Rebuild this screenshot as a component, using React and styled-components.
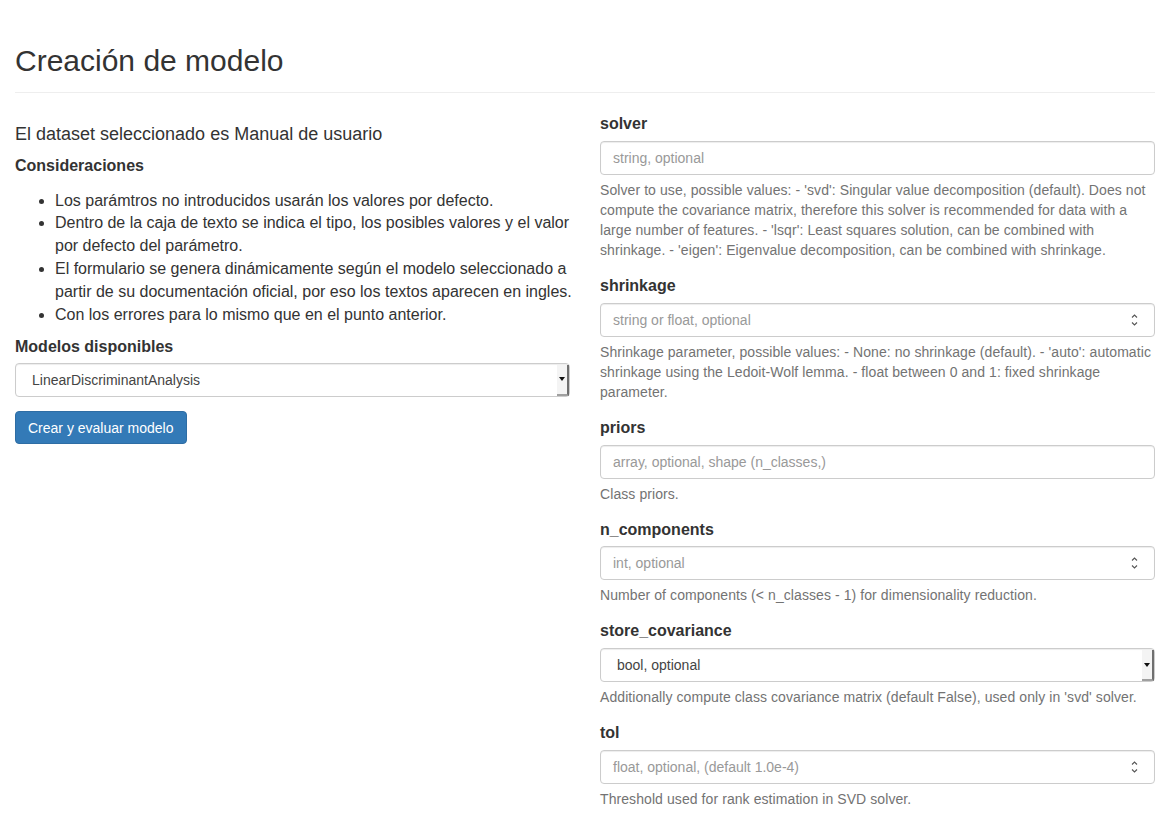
import styled, { createGlobalStyle } from 'styled-components';

const GlobalStyle = createGlobalStyle`
    * {
        box-sizing: border-box;
    }
    body {
        margin: 0;
        background: #fff;
        font-family: "Liberation Sans", Arial, sans-serif;
        font-size: 14px;
        line-height: 1.42857143;
        color: #333;
    }
`;

const Page = styled.div`
    padding: 0 15px;
`;

const PageHeader = styled.div`
    margin: 44px 0 20px;
    padding-bottom: 9px;
    border-bottom: 1px solid #eee;
`;

const Title = styled.h2`
    margin: 0 0 6px;
    font-size: 30px;
    font-weight: 500;
    line-height: 1.1;
`;

const Row = styled.div`
    display: grid;
    grid-template-columns: 1fr 1fr;
    column-gap: 30px;
`;

const Column = styled.div`
    display: flex;
    flex-direction: column;
    align-items: stretch;
`;

const Subtitle = styled.h4`
    margin: 12px 0 10px;
    font-size: 18px;
    font-weight: 500;
    line-height: 1.1;
`;

const Heading = styled.p`
    margin: 0 0 12px;
    font-size: 16px;
    font-weight: bold;
    line-height: 1.42857143;
`;

const List = styled.ul`
    margin: 0 -8px 9px 0;
    padding-left: 40px;
    font-size: 16px;
    line-height: 1.42857143;
`;

const FormGroup = styled.div`
    margin-bottom: ${p => p.$gap || '15px'};
`;

const Label = styled.label`
    display: block;
    margin-bottom: ${p => p.$gap || '5px'};
    font-size: 16px;
    font-weight: bold;
    line-height: 1.42857143;
`;

const Field = styled.div`
    position: relative;
    display: flex;
    align-items: center;
    height: 34px;
    padding: 6px 12px;
    border: 1px solid #ccc;
    border-radius: 4px;
    background: #fff;
    box-shadow: inset 0 1px 1px rgba(0, 0, 0, 0.075);
    font-size: 14px;
    color: ${p => (p.$value ? '#444' : '#999')};
`;

const FieldText = styled.span`
    flex: 1;
    padding-left: ${p => (p.$select ? '4px' : '0')};
    white-space: nowrap;
`;

const Spinner = styled.span`
    display: flex;
    align-items: center;
    margin-right: 3px;
`;

const DropButton = styled.span`
    position: absolute;
    top: 1px;
    right: 0;
    bottom: 0;
    width: 12px;
    display: flex;
    align-items: center;
    justify-content: center;
    background: #f4f4f4;
    border-right: 2px solid #6f6f6f;
    border-bottom: 2px solid #a0a0a0;
`;

const Triangle = styled.span`
    width: 0;
    height: 0;
    border-left: 3px solid transparent;
    border-right: 3px solid transparent;
    border-top: 4px solid #111;
`;

const Help = styled.p`
    margin: 5px 0 0;
    color: #737373;
    font-size: 14px;
    line-height: 1.42857143;
    letter-spacing: 0.08px;
`;

const Button = styled.button`
    align-self: flex-start;
    height: 33px;
    padding: 6px 12px;
    border: 1px solid #2e6da4;
    border-radius: 4px;
    background: #337ab7;
    color: #fff;
    font-family: inherit;
    font-size: 14px;
    line-height: 1.42857143;
`;

const SpinIcon = () => (
    <svg width="9" height="16" viewBox="0 0 9 16" fill="none" stroke="#555" strokeWidth="1.1">
        <path d="M2 5.5 L4.5 3 L7 5.5" />
        <path d="M2 10.5 L4.5 13 L7 10.5" />
    </svg>
);

const Input = ({ placeholder, spin }) => (
    <Field>
        <FieldText>{placeholder}</FieldText>
        {spin && (
            <Spinner>
                <SpinIcon />
            </Spinner>
        )}
    </Field>
);

const Select = ({ value }) => (
    <Field $value>
        <FieldText $select>{value}</FieldText>
        <DropButton>
            <Triangle />
        </DropButton>
    </Field>
);

const params = [
    {
        name: 'solver',
        placeholder: 'string, optional',
        help: "Solver to use, possible values: - 'svd': Singular value decomposition (default). Does not compute the covariance matrix, therefore this solver is recommended for data with a large number of features. - 'lsqr': Least squares solution, can be combined with shrinkage. - 'eigen': Eigenvalue decomposition, can be combined with shrinkage.",
    },
    {
        name: 'shrinkage',
        placeholder: 'string or float, optional',
        spin: true,
        help: "Shrinkage parameter, possible values: - None: no shrinkage (default). - 'auto': automatic shrinkage using the Ledoit-Wolf lemma. - float between 0 and 1: fixed shrinkage parameter.",
    },
    {
        name: 'priors',
        placeholder: 'array, optional, shape (n_classes,)',
        help: 'Class priors.',
    },
    {
        name: 'n_components',
        placeholder: 'int, optional',
        spin: true,
        help: 'Number of components (< n_classes - 1) for dimensionality reduction.',
    },
    {
        name: 'store_covariance',
        select: 'bool, optional',
        help: "Additionally compute class covariance matrix (default False), used only in 'svd' solver.",
    },
    {
        name: 'tol',
        placeholder: 'float, optional, (default 1.0e-4)',
        spin: true,
        help: 'Threshold used for rank estimation in SVD solver.',
    },
];

const tips = [
    'Los parámtros no introducidos usarán los valores por defecto.',
    'Dentro de la caja de texto se indica el tipo, los posibles valores y el valor por defecto del parámetro.',
    'El formulario se genera dinámicamente según el modelo seleccionado a partir de su documentación oficial, por eso los textos aparecen en ingles.',
    'Con los errores para lo mismo que en el punto anterior.',
];

const App = () => {

    return (
        <>
            <GlobalStyle />
            <Page>
                <PageHeader>
                    <Title>Creación de modelo</Title>
                </PageHeader>
                <Row>
                    <Column>
                        <Subtitle>El dataset seleccionado es Manual de usuario</Subtitle>
                        <Heading>Consideraciones</Heading>
                        <List>
                            {tips.map(t => <li key={t}>{t}</li>)}
                        </List>
                        <FormGroup $gap="14px">
                            <Label $gap="4px">Modelos disponibles</Label>
                            <Select value="LinearDiscriminantAnalysis" />
                        </FormGroup>
                        <Button>Crear y evaluar modelo</Button>
                    </Column>
                    <Column>
                        {params.map((p, i) => (
                            <FormGroup key={p.name} $gap={i === params.length - 1 ? '0' : '15px'}>
                                <Label>{p.name}</Label>
                                {p.select
                                    ? <Select value={p.select} />
                                    : <Input placeholder={p.placeholder} spin={p.spin} />}
                                <Help>{p.help}</Help>
                            </FormGroup>
                        ))}
                    </Column>
                </Row>
            </Page>
        </>
    );

};

export default App;
